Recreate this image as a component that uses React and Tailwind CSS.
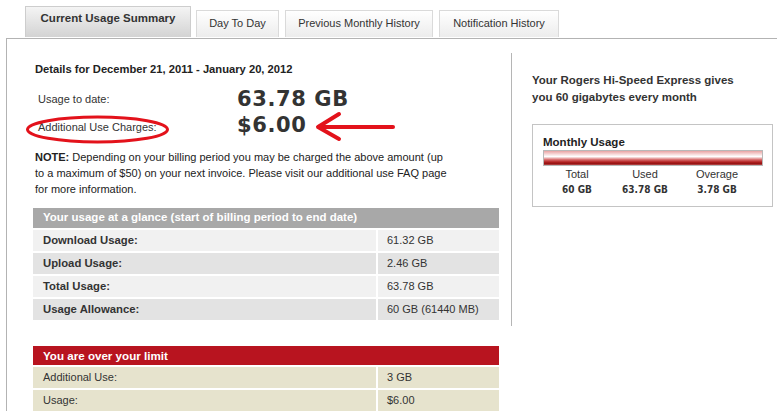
export default function App() {
  const usageRows = [
    ["Download Usage:", "61.32 GB", "bg-[#f1f1f1]"],
    ["Upload Usage:", "2.46 GB", "bg-[#e3e3e3]"],
    ["Total Usage:", "63.78 GB", "bg-[#f1f1f1]"],
    ["Usage Allowance:", "60 GB (61440 MB)", "bg-[#e3e3e3]"],
  ];
  return (
    <div className="relative w-[777px] h-[411px] overflow-hidden bg-white font-['Liberation_Sans',Arial,sans-serif] text-[#333] flex flex-col">
      {/* Tabs */}
      <div className="flex items-end h-[38px] pl-[25px] shrink-0">
        <div className="h-[31px] mb-[1px] w-[166px] pt-[4px] text-center border border-b-0 border-[#cdcdcd] bg-gradient-to-b from-[#f4f4f4] to-[#d3d3d3] font-bold text-[11.5px] leading-[14px] text-[#333]">
          Current Usage Summary
        </div>
        <div className="ml-[5px] h-[27px] mb-[1px] w-[83px] pt-[5px] text-center border border-b-0 border-[#dadada] bg-gradient-to-b from-[#ffffff] to-[#ececec] text-[11px] leading-[14px] text-[#333]">
          Day To Day
        </div>
        <div className="ml-[6px] h-[27px] mb-[1px] w-[148px] pt-[5px] text-center border border-b-0 border-[#dadada] bg-gradient-to-b from-[#ffffff] to-[#ececec] text-[11px] leading-[14px] text-[#333]">
          Previous Monthly History
        </div>
        <div className="ml-[6px] h-[27px] mb-[1px] w-[120px] pt-[5px] text-center border border-b-0 border-[#dadada] bg-gradient-to-b from-[#ffffff] to-[#ececec] text-[11px] leading-[14px] text-[#333]">
          Notification History
        </div>
      </div>

      {/* Panel */}
      <div className="flex-1 ml-[6px] border-t border-l border-[#b3b3b3]">
        <div className="flex">
          {/* Left column */}
          <div className="w-[466px] ml-[26px] pt-[23px] pb-[6px]">
            <div className="font-bold text-[11.2px] leading-[14px] text-[#222] pl-[2px]">
              Details for December 21, 2011 - January 20, 2012
            </div>
            <div className="mt-[10px] grid grid-cols-[199px_auto] pl-[5px]">
              <div className="h-[26px] flex items-center text-[11px]">Usage to date:</div>
              <div className="h-[26px] flex items-center pt-[2px] font-['DejaVu_Sans',Verdana,sans-serif] font-bold text-[21px] tracking-[0.6px] text-[#333]">
                63.78 GB
              </div>
              <div className="h-[26px] flex items-center pt-[4px] text-[11px]">Additional Use Charges:</div>
              <div className="h-[26px] flex items-center pt-[1px] font-['DejaVu_Sans',Verdana,sans-serif] font-bold text-[21px] tracking-[0.6px] text-[#333]">
                $6.00
              </div>
            </div>
            <p className="mt-[11px] pl-[2px] w-[414px] text-[11px] leading-[16px] text-[#222]">
              <span className="font-bold">NOTE:</span> Depending on your billing period you may be charged the above amount (up to a maximum of $50) on your next invoice. Please visit our additional use FAQ page for more information.
            </p>
            <div className="mt-[11px] flex flex-col gap-[2px]">
              <div className="h-[20px] bg-[#a8a8a8] text-white font-bold text-[11.5px] flex items-center pl-[10px]">
                Your usage at a glance (start of billing period to end date)
              </div>
              {usageRows.map(([l, v, bg]) => (
                <div key={l} className="flex gap-[2px] h-[21px]">
                  <div className={`w-[343px] ${bg} flex items-center pl-[10px] font-bold text-[11.3px] text-[#333]`}>{l}</div>
                  <div className={`flex-1 ${bg} flex items-center pl-[9px] text-[11px] text-[#333]`}>{v}</div>
                </div>
              ))}
            </div>
          </div>

          {/* Divider */}
          <div className="ml-[12px] mt-[14px] w-px bg-[#b5b5b5]" />

          {/* Right column */}
          <div className="pl-[20px] pt-[33px]">
            <div className="font-bold text-[11.5px] leading-[17px] text-[#333]">
              Your Rogers Hi-Speed Express gives<br />you 60 gigabytes every month
            </div>
            <div className="mt-[18px] w-[241px] border border-[#c4c4c4] pt-[10px] pb-[9px] pl-[10px] pr-[9px]">
              <div className="font-bold text-[11.5px] leading-[14px] text-[#222]">Monthly Usage</div>
              <div className="mt-[1px] h-[16px] border border-[#b8b8b8] bg-[linear-gradient(to_bottom,#e9a3a3_0%,#f8dede_25%,#ffffff_40%,#d86a6a_62%,#b01e1e_80%,#8e1212_92%,#c45a5a_100%)]" />
              <div className="mt-[1px] grid grid-cols-[68px_68px_76px] text-center text-[11px] leading-[14px]">
                <div>Total</div>
                <div>Used</div>
                <div>Overage</div>
                <div className="mt-[2px] font-bold font-['DejaVu_Sans_Condensed','DejaVu_Sans',sans-serif] text-[10px] text-[#333]">60 GB</div>
                <div className="mt-[2px] font-bold font-['DejaVu_Sans_Condensed','DejaVu_Sans',sans-serif] text-[10px] text-[#333]">63.78 GB</div>
                <div className="mt-[2px] font-bold font-['DejaVu_Sans_Condensed','DejaVu_Sans',sans-serif] text-[10px] text-[#333]">3.78 GB</div>
              </div>
            </div>
          </div>
        </div>

        {/* Over limit table */}
        <div className="mt-[20px] ml-[26px] w-[466px] flex flex-col gap-[2px]">
          <div className="h-[19px] bg-[#b8141f] text-white font-bold text-[11.6px] flex items-center pl-[10px]">
            You are over your limit
          </div>
          {[["Additional Use:", "3 GB"], ["Usage:", "$6.00"]].map(([l, v]) => (
            <div key={l} className="flex gap-[2px] h-[21px]">
              <div className="w-[343px] bg-[#e6e3cd] flex items-center pl-[10px] text-[11px] text-[#333]">{l}</div>
              <div className="flex-1 bg-[#e6e3cd] flex items-center pl-[9px] text-[11px] text-[#333]">{v}</div>
            </div>
          ))}
        </div>
      </div>

      {/* Red annotation overlay */}
      <svg className="absolute left-0 top-0 pointer-events-none" width="777" height="411" viewBox="0 0 777 411">
        <ellipse cx="97.5" cy="129.5" rx="70" ry="12.5" fill="none" stroke="#e3121b" strokeWidth="3" />
        <line x1="320" y1="127" x2="393" y2="127" stroke="#e3121b" strokeWidth="4" strokeLinecap="round" />
        <polyline points="339,114 318,127 339,139" fill="none" stroke="#e3121b" strokeWidth="4" strokeLinecap="round" strokeLinejoin="round" />
      </svg>
    </div>
  );
}
